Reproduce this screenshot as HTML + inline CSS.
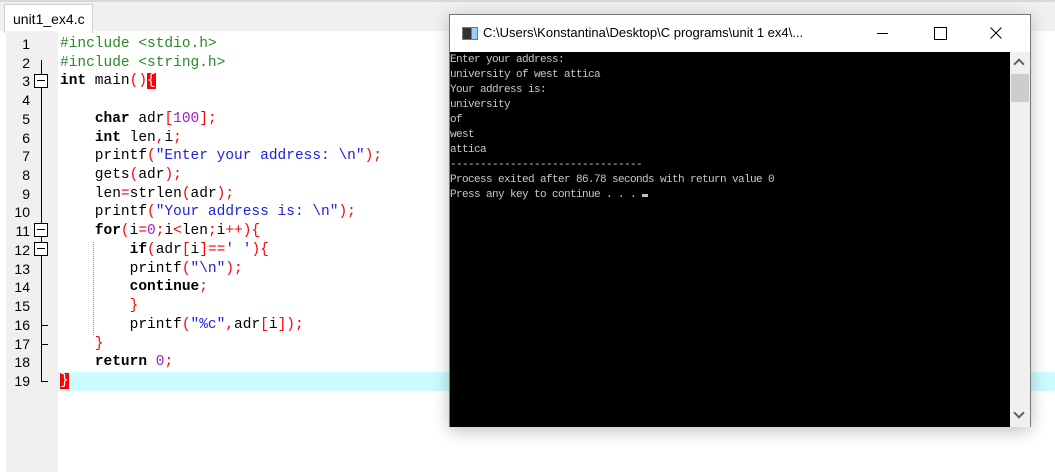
<!DOCTYPE html>
<html><head><style>
body{margin:0;width:1055px;height:472px;overflow:hidden;background:#fff;font-family:"Liberation Sans",sans-serif;position:relative}
.tabbar{position:absolute;left:0;top:0;width:1055px;height:31px;background:#f0f0f0;border-top:2px solid #d8d8d8;box-sizing:border-box}
.tab{position:absolute;left:4px;top:2px;width:89px;height:29px;background:#fff;border:1px solid #d0d0d0;border-bottom:none;box-sizing:border-box;font-size:14px;padding:6px 0 0 8px;color:#000}
.gut{position:absolute;left:6px;top:31px;width:52px;height:441px;background:#f0f0f0}
.ed{position:absolute;left:0;top:35px;width:1055px;font-family:"Liberation Mono",monospace;font-size:14.5px}
.row{height:18.72px;line-height:18.72px;position:relative;white-space:pre}
.num{position:absolute;left:8px;width:22px;text-align:right;font-family:"Liberation Sans",sans-serif;font-size:14px}
.code{position:absolute;left:60px;color:#000}
.k{font-weight:bold}.g{color:#2a8a2a}.r{color:#f00}.b{color:#2020e0}.p{color:#a020c0}
.hl{position:absolute;left:58px;right:0;top:372px;height:18.72px;background:#ccfcff}
.fb{position:absolute;left:34px;width:14px;height:14px;border:1px solid #000;box-sizing:border-box;background:#fff}
.fb:after{content:"";position:absolute;left:2px;right:2px;top:5px;height:1px;background:#000}
.vl{position:absolute;left:41px;width:1px;background:#000}
.con{position:absolute;left:449px;top:14px;width:582px;height:413px;border:1px solid #777;box-sizing:border-box;background:#fff;box-shadow:0 4px 16px rgba(0,0,0,.25)}
.title{position:absolute;left:33px;top:10px;font-size:13px;color:#000}
.blk{position:absolute;left:0;top:37px;width:560px;height:375px;background:#000;font-family:"Liberation Mono",monospace;font-size:11px;letter-spacing:-0.6px;color:#c8c8c8;line-height:15px;white-space:pre;padding-top:1px;box-sizing:border-box}
.sb{position:absolute;left:560px;top:37px;width:20px;height:375px;background:#f0f0f0}
</style></head><body>
<div class="tabbar"><div class="tab">unit1_ex4.c</div></div>
<div class="gut"></div>
<div class="hl"></div>
<div class="vl" style="top:60px;height:321px"></div>
<div class="vl" style="top:381px;width:7px;height:1px"></div>
<div class="vl" style="top:325px;width:7px;height:1px"></div>
<div class="vl" style="top:344px;width:7px;height:1px"></div>
<div class="fb" style="top:74px"></div>
<div class="fb" style="top:223px"></div>
<div class="fb" style="top:242px"></div>
<div style="position:absolute;left:93px;top:242px;height:93px;border-left:1px dotted #999"></div>
<div class="ed">
<div class="row"><span class="num">1</span><span class="code g">#include &lt;stdio.h&gt;</span></div>
<div class="row"><span class="num">2</span><span class="code g">#include &lt;string.h&gt;</span></div>
<div class="row"><span class="num">3</span><span class="code"><span class="k">int</span> main<span class="r">()</span><span style="background:#f00;color:#fff">{</span></span></div>
<div class="row"><span class="num">4</span></div>
<div class="row"><span class="num">5</span><span class="code">    <span class="k">char</span> adr<span class="r">[</span><span class="p">100</span><span class="r">];</span></span></div>
<div class="row"><span class="num">6</span><span class="code">    <span class="k">int</span> len<span class="r">,</span>i<span class="r">;</span></span></div>
<div class="row"><span class="num">7</span><span class="code">    printf<span class="r">(</span><span class="b">"Enter your address: \n"</span><span class="r">);</span></span></div>
<div class="row"><span class="num">8</span><span class="code">    gets<span class="r">(</span>adr<span class="r">);</span></span></div>
<div class="row"><span class="num">9</span><span class="code">    len<span class="r">=</span>strlen<span class="r">(</span>adr<span class="r">);</span></span></div>
<div class="row"><span class="num">10</span><span class="code">    printf<span class="r">(</span><span class="b">"Your address is: \n"</span><span class="r">);</span></span></div>
<div class="row"><span class="num">11</span><span class="code">    <span class="k">for</span><span class="r">(</span>i<span class="r">=</span><span class="p">0</span><span class="r">;</span>i<span class="r">&lt;</span>len<span class="r">;</span>i<span class="r">++){</span></span></div>
<div class="row"><span class="num">12</span><span class="code">        <span class="k">if</span><span class="r">(</span>adr<span class="r">[</span>i<span class="r">]==</span><span class="b">' '</span><span class="r">){</span></span></div>
<div class="row"><span class="num">13</span><span class="code">        printf<span class="r">(</span><span class="b">"\n"</span><span class="r">);</span></span></div>
<div class="row"><span class="num">14</span><span class="code">        <span class="k">continue</span><span class="r">;</span></span></div>
<div class="row"><span class="num">15</span><span class="code r">        }</span></div>
<div class="row"><span class="num">16</span><span class="code">        printf<span class="r">(</span><span class="b">"%c"</span><span class="r">,</span>adr<span class="r">[</span>i<span class="r">]);</span></span></div>
<div class="row"><span class="num">17</span><span class="code r">    }</span></div>
<div class="row"><span class="num">18</span><span class="code">    <span class="k">return</span> <span class="p">0</span><span class="r">;</span></span></div>
<div class="row"><span class="num">19</span><span class="code"><span style="background:#f00;color:#fff">}</span></span></div>
</div>
<div class="con">
<div style="position:absolute;left:12px;top:12px;width:14px;height:11px;border:1px solid #777;background:linear-gradient(90deg,#333 60%,#9cf 60%)"></div>
<div class="title">C:\Users\Konstantina\Desktop\C programs\unit 1 ex4\...</div>
<div style="position:absolute;left:427px;top:18px;width:11px;height:1px;background:#000"></div>
<div style="position:absolute;left:484px;top:12px;width:11px;height:11px;border:1px solid #000"></div>
<svg style="position:absolute;left:540px;top:12px" width="12" height="12"><path d="M0.5 0.5L11.5 11.5M11.5 0.5L0.5 11.5" stroke="#000" stroke-width="1"/></svg>
<div class="blk">Enter your address:
university of west attica
Your address is:
university
of
west
attica
--------------------------------
Process exited after 86.78 seconds with return value 0
Press any key to continue . . . <span style="display:inline-block;width:6px;height:3px;background:#c0c0c0"></span></div>
<div class="sb">
<div style="position:absolute;left:5px;top:8px;width:6px;height:6px;border-left:2px solid #606060;border-top:2px solid #606060;transform:rotate(45deg)"></div>
<div style="position:absolute;left:1px;top:22px;width:18px;height:28px;background:#cdcdcd"></div>
<div style="position:absolute;left:5px;top:357px;width:6px;height:6px;border-right:2px solid #606060;border-bottom:2px solid #606060;transform:rotate(45deg)"></div>
</div>
</div>
</body></html>
